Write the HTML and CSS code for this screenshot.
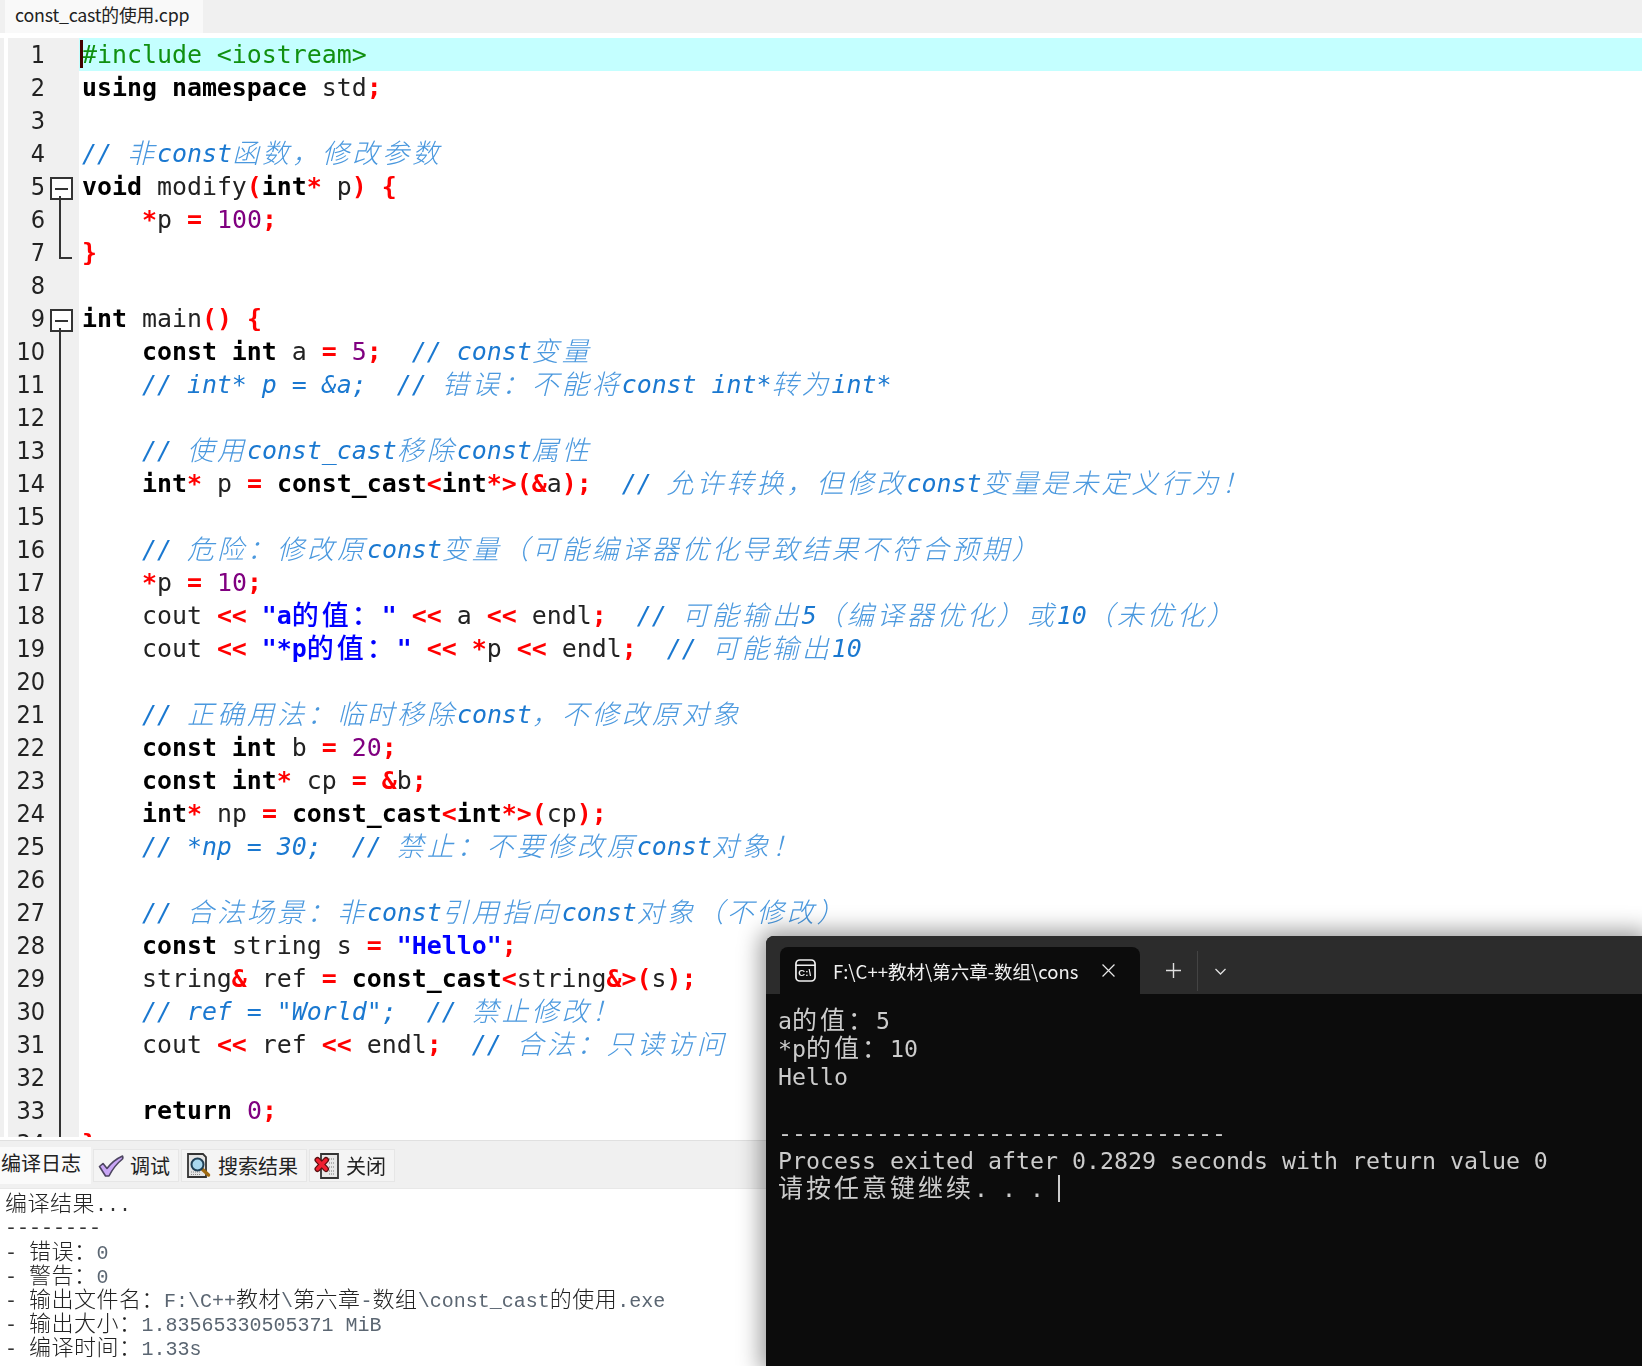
FILE: index.html
```html
<!DOCTYPE html>
<html lang="zh">
<head>
<meta charset="utf-8">
<title>const_cast的使用.cpp</title>
<link rel="stylesheet" href="styles.css">
</head>
<body>
<div class="app">
  <div class="filebar"><div class="filetab">const_cast的使用.cpp</div></div>
  <div class="editor">
    <div class="row active"><div class="gut"><span class="ln">1</span><span class="fold"></span></div><div class="code"><span class="caret"></span><span class="p">#include &lt;iostream&gt;</span></div></div>
    <div class="row"><div class="gut"><span class="ln">2</span><span class="fold"></span></div><div class="code"><b>using namespace</b> std<b class="s">;</b></div></div>
    <div class="row"><div class="gut"><span class="ln">3</span><span class="fold"></span></div><div class="code"></div></div>
    <div class="row"><div class="gut"><span class="ln">4</span><span class="fold"></span></div><div class="code c">// <i class="z">非</i>const<i class="z">函数，修改参数</i></div></div>
    <div class="row"><div class="gut"><span class="ln">5</span><span class="fold box"></span></div><div class="code"><b>void</b> modify<b class="s">(</b><b>int</b><b class="s">*</b> p<b class="s">)</b> <b class="s">{</b></div></div>
    <div class="row"><div class="gut"><span class="ln">6</span><span class="fold line"></span></div><div class="code">    <b class="s">*</b>p <b class="s">=</b> <span class="n">100</span><b class="s">;</b></div></div>
    <div class="row"><div class="gut"><span class="ln">7</span><span class="fold end"></span></div><div class="code"><b class="s">}</b></div></div>
    <div class="row"><div class="gut"><span class="ln">8</span><span class="fold"></span></div><div class="code"></div></div>
    <div class="row"><div class="gut"><span class="ln">9</span><span class="fold box"></span></div><div class="code"><b>int</b> main<b class="s">()</b> <b class="s">{</b></div></div>
    <div class="row"><div class="gut"><span class="ln">10</span><span class="fold line"></span></div><div class="code">    <b>const int</b> a <b class="s">=</b> <span class="n">5</span><b class="s">;</b>  <span class="c">// const<i class="z">变量</i></span></div></div>
    <div class="row"><div class="gut"><span class="ln">11</span><span class="fold line"></span></div><div class="code c">    // int* p = &amp;a;  // <i class="z">错误：不能将</i>const int*<i class="z">转为</i>int*</div></div>
    <div class="row"><div class="gut"><span class="ln">12</span><span class="fold line"></span></div><div class="code"></div></div>
    <div class="row"><div class="gut"><span class="ln">13</span><span class="fold line"></span></div><div class="code c">    // <i class="z">使用</i>const_cast<i class="z">移除</i>const<i class="z">属性</i></div></div>
    <div class="row"><div class="gut"><span class="ln">14</span><span class="fold line"></span></div><div class="code">    <b>int</b><b class="s">*</b> p <b class="s">=</b> <b>const_cast</b><b class="s">&lt;</b><b>int</b><b class="s">*&gt;(&amp;</b>a<b class="s">);</b>  <span class="c">// <i class="z">允许转换，但修改</i>const<i class="z">变量是未定义行为！</i></span></div></div>
    <div class="row"><div class="gut"><span class="ln">15</span><span class="fold line"></span></div><div class="code"></div></div>
    <div class="row"><div class="gut"><span class="ln">16</span><span class="fold line"></span></div><div class="code c">    // <i class="z">危险：修改原</i>const<i class="z">变量（可能编译器优化导致结果不符合预期）</i></div></div>
    <div class="row"><div class="gut"><span class="ln">17</span><span class="fold line"></span></div><div class="code">    <b class="s">*</b>p <b class="s">=</b> <span class="n">10</span><b class="s">;</b></div></div>
    <div class="row"><div class="gut"><span class="ln">18</span><span class="fold line"></span></div><div class="code">    cout <b class="s">&lt;&lt;</b> <b class="st">"a<i class="y">的值：</i>"</b> <b class="s">&lt;&lt;</b> a <b class="s">&lt;&lt;</b> endl<b class="s">;</b>  <span class="c">// <i class="z">可能输出</i>5<i class="z">（编译器优化）或</i>10<i class="z">（未优化）</i></span></div></div>
    <div class="row"><div class="gut"><span class="ln">19</span><span class="fold line"></span></div><div class="code">    cout <b class="s">&lt;&lt;</b> <b class="st">"*p<i class="y">的值：</i>"</b> <b class="s">&lt;&lt;</b> <b class="s">*</b>p <b class="s">&lt;&lt;</b> endl<b class="s">;</b>  <span class="c">// <i class="z">可能输出</i>10</span></div></div>
    <div class="row"><div class="gut"><span class="ln">20</span><span class="fold line"></span></div><div class="code"></div></div>
    <div class="row"><div class="gut"><span class="ln">21</span><span class="fold line"></span></div><div class="code c">    // <i class="z">正确用法：临时移除</i>const<i class="z">，不修改原对象</i></div></div>
    <div class="row"><div class="gut"><span class="ln">22</span><span class="fold line"></span></div><div class="code">    <b>const int</b> b <b class="s">=</b> <span class="n">20</span><b class="s">;</b></div></div>
    <div class="row"><div class="gut"><span class="ln">23</span><span class="fold line"></span></div><div class="code">    <b>const int</b><b class="s">*</b> cp <b class="s">=</b> <b class="s">&amp;</b>b<b class="s">;</b></div></div>
    <div class="row"><div class="gut"><span class="ln">24</span><span class="fold line"></span></div><div class="code">    <b>int</b><b class="s">*</b> np <b class="s">=</b> <b>const_cast</b><b class="s">&lt;</b><b>int</b><b class="s">*&gt;(</b>cp<b class="s">);</b></div></div>
    <div class="row"><div class="gut"><span class="ln">25</span><span class="fold line"></span></div><div class="code c">    // *np = 30;  // <i class="z">禁止：不要修改原</i>const<i class="z">对象！</i></div></div>
    <div class="row"><div class="gut"><span class="ln">26</span><span class="fold line"></span></div><div class="code"></div></div>
    <div class="row"><div class="gut"><span class="ln">27</span><span class="fold line"></span></div><div class="code c">    // <i class="z">合法场景：非</i>const<i class="z">引用指向</i>const<i class="z">对象（不修改）</i></div></div>
    <div class="row"><div class="gut"><span class="ln">28</span><span class="fold line"></span></div><div class="code">    <b>const</b> string s <b class="s">=</b> <b class="st">"Hello"</b><b class="s">;</b></div></div>
    <div class="row"><div class="gut"><span class="ln">29</span><span class="fold line"></span></div><div class="code">    string<b class="s">&amp;</b> ref <b class="s">=</b> <b>const_cast</b><b class="s">&lt;</b>string<b class="s">&amp;&gt;(</b>s<b class="s">);</b></div></div>
    <div class="row"><div class="gut"><span class="ln">30</span><span class="fold line"></span></div><div class="code c">    // ref = "World";  // <i class="z">禁止修改！</i></div></div>
    <div class="row"><div class="gut"><span class="ln">31</span><span class="fold line"></span></div><div class="code">    cout <b class="s">&lt;&lt;</b> ref <b class="s">&lt;&lt;</b> endl<b class="s">;</b>  <span class="c">// <i class="z">合法：只读访问</i></span></div></div>
    <div class="row"><div class="gut"><span class="ln">32</span><span class="fold line"></span></div><div class="code"></div></div>
    <div class="row"><div class="gut"><span class="ln">33</span><span class="fold line"></span></div><div class="code">    <b>return</b> <span class="n">0</span><b class="s">;</b></div></div>
    <div class="row"><div class="gut"><span class="ln">34</span><span class="fold end"></span></div><div class="code"><b class="s">}</b></div></div>
  </div>
  <div class="tools">
    <div class="tool current">编译日志</div>
    <div class="tool">
      <svg class="ico" viewBox="0 0 26 26"><path d="M1.5 13.5l3.5-3 4 5C13 10 18 6 24.5 3c.5 1 .5 2 0 3-5 4-10 10-13.5 17h-3.500z" fill="#c9a6f6" stroke="#4c4460" stroke-width="1.600" stroke-linejoin="round"/></svg>
      调试
    </div>
    <div class="tool">
      <svg class="ico" viewBox="0 0 26 26"><path d="M2 1h15l3 3v20H2z" fill="#e4e4e4" stroke="#333" stroke-width="1.800"/><path d="M5 19h10M5 21.500h10" stroke="#888" stroke-dasharray="1 1"/><path d="M15 15l7.500 7" stroke="#a06a10" stroke-width="3.500" stroke-linecap="round"/><circle cx="11.500" cy="11.500" r="6" fill="#a9d8ef" stroke="#1f3f55" stroke-width="2"/></svg>
      搜索结果
    </div>
    <div class="tool">
      <svg class="ico" viewBox="0 0 26 26"><path d="M7 1h17v24H7z" fill="#e8e8e8" stroke="#333" stroke-width="1.800"/><path d="M15 6h6M15 10h6M15 14h6M15 18h6M15 21h6" stroke="#777" stroke-dasharray="1 1"/><path d="M3.500 7l8.500 9M12 7l-8.500 9" stroke="#5a1010" stroke-width="6" stroke-linecap="round"/><path d="M3.500 7l8.500 9M12 7l-8.500 9" stroke="#f02030" stroke-width="3.500" stroke-linecap="round"/></svg>
      关闭
    </div>
  </div>
  <div class="log">
    <div class="lg first"><span class="h">编译结果</span>...</div>
    <div class="lg dash">--------</div>
    <div class="lg">- <span class="h">错误：</span><span class="v">0</span></div>
    <div class="lg">- <span class="h">警告：</span><span class="v">0</span></div>
    <div class="lg">- <span class="h">输出文件名：</span><span class="v">F:\C++<span class="h">教材</span>\<span class="h">第六章</span>-<span class="h">数组</span>\const_cast<span class="h">的使用</span>.exe</span></div>
    <div class="lg">- <span class="h">输出大小：</span><span class="v">1.83565330505371 MiB</span></div>
    <div class="lg">- <span class="h">编译时间：</span><span class="v">1.33s</span></div>
  </div>
</div>
<div class="term">
  <div class="term-bar">
    <div class="term-tab">
      <svg class="term-ico" viewBox="0 0 22 24"><rect x="1" y="1" width="20" height="22" rx="4" fill="none" stroke="#f0f0f0" stroke-width="1.800"/><path d="M1 6.500h20" stroke="#f0f0f0" stroke-width="1.600"/><text x="3.500" y="18" class="term-ico-t">C:\</text></svg>
      <span class="term-title">F:\C++教材\第六章-数组\const_cast的使用.exe</span>
      <svg class="term-x" viewBox="0 0 12 12"><path d="M0.500 0.500l11 11M11.500 0.500l-11 11" stroke="#e8e8e8" stroke-width="1.100"/></svg>
    </div>
    <svg class="term-plus" viewBox="0 0 14 14"><path d="M7 0v14M0 7h14" stroke="#e0e0e0" stroke-width="1.300"/></svg>
    <span class="term-div"></span>
    <svg class="term-chev" viewBox="0 0 12 8"><path d="M1 1l5 5 5-5" fill="none" stroke="#e0e0e0" stroke-width="1.300"/></svg>
  </div>
  <div class="term-body">
    <div class="tl">a<span class="tz">的值：</span>5</div>
    <div class="tl">*p<span class="tz">的值：</span>10</div>
    <div class="tl">Hello</div>
    <div class="tl"></div>
    <div class="tl">--------------------------------</div>
    <div class="tl">Process exited after 0.2829 seconds with return value 0</div>
    <div class="tl"><span class="tz">请按任意键继续</span>. . . <span class="tcur"></span></div>
  </div>
</div>
</body>
</html>
```

FILE: styles.css
```css
* { box-sizing: border-box; }
html, body { margin: 0; height: 1366px; overflow: hidden; background: #fff; }
.app { height: 1366px; display: flex; flex-direction: column; filter: blur(0.45px); overflow: hidden; }

.filebar { height: 38px; flex: none; background: linear-gradient(#f0f0f0 0 33px, #fff 33px); padding-left: 5px; }
.filetab { width: 198px; height: 33px; background: #f9f9f9; padding-left: 10px; font: 17.8px/29px "Noto Sans CJK SC", "Noto Sans", sans-serif; color: #222; white-space: nowrap; letter-spacing: -0.2px; }

.editor { height: 1099px; flex: none; overflow: hidden; padding-left: 9px; border-left: 4px solid #f0f0f0; font: 24.9px/33px "DejaVu Sans Mono", "Noto Sans CJK SC", monospace; color: #222; }
.row { display: flex; height: 33px; }
.active { background: #c4ffff; }
.gut { flex: none; width: 71px; margin-left: -5px; padding-left: 5px; display: flex; background: #f0f0f0; }
.ln { width: 32px; flex: none; text-align: right; font-size: 25px; color: #222; font-family: "DejaVu Sans Condensed", "DejaVu Sans Mono", monospace; }
.fold { position: relative; flex: none; width: 34px; }
.fold.box::before { content: ""; position: absolute; left: 5px; top: 7px; width: 19px; height: 19px; border: 2px solid #333; background: linear-gradient(#333, #333) center / 13px 2px no-repeat #fff; }
.fold.box::after { content: ""; position: absolute; left: 14px; top: 26px; height: 7px; border-left: 2px solid #333; }
.fold.line::before { content: ""; position: absolute; left: 14px; top: 0; bottom: 0; border-left: 2px solid #333; }
.fold.end::before { content: ""; position: absolute; left: 14px; top: 0; height: 21px; width: 11px; border-left: 2px solid #333; border-bottom: 2px solid #333; }
.code { flex: 1; padding-left: 3px; white-space: pre; position: relative; }
.caret { position: absolute; left: 1px; top: 2px; width: 2.5px; height: 28px; background: #400; }
b { font-weight: 700; color: #000; }
b.s { color: #f00; }
b.st { color: #00f; }
.n { color: #800080; }
.p { color: #109010; }
.c { color: #1a78d0; font-style: italic; }
.z { font-size: 27px; letter-spacing: 3px; font-style: italic; font-weight: 300; color: #4a98de; vertical-align: -1px; }
.y { font-size: 27px; letter-spacing: 3px; font-style: normal; font-weight: 500; vertical-align: -1px; }

.tools { flex: none; height: 48px; margin-top: 3px; padding-top: 6px; background: #f0f0f0; border-top: 1px solid #e0e0e0; display: flex; gap: 2px; font: 20px/32px "Noto Sans CJK SC", sans-serif; color: #222; }
.tool { display: flex; align-items: center; gap: 6px; padding: 0 8px 0 4px; height: 33px; margin-top: 2px; background: #f4f4f4; border: 1px solid #e6e6e6; white-space: nowrap; }
.tool.current { margin-top: 0; height: 37px; padding: 0 12px 6px 1px; background: #fafafa; border: 0; width: 91px; }
.ico { width: 26px; height: 26px; flex: none; }

.log { flex: 1; padding: 0 0 0 5px; border-top: 1px solid #e8e8e8; font: 20px/24px "Liberation Mono", "Noto Sans CJK SC", monospace; color: #333; }
.lg { height: 24px; white-space: pre; }
.lg.first { margin-top: -1px; height: 29px; line-height: 26px; }
.lg.dash { height: 20px; }
.h { font-size: 22px; letter-spacing: 0.5px; font-family: "Noto Sans CJK SC", sans-serif; font-weight: 300; color: #222; }
.v { color: #5b6672; }

.term { position: absolute; left: 766px; top: 936px; right: 0; bottom: 0; background: #0c0c0c; border-top-left-radius: 8px; box-shadow: 0 0 22px 6px rgba(0,0,0,.38); filter: blur(0.3px); }
.term-bar { height: 58px; background: #2c2c2c; border-top-left-radius: 8px; padding: 11px 0 0 14px; display: flex; align-items: flex-start; }
.term-tab { width: 360px; height: 47px; background: #0c0c0c; border-radius: 8px 8px 0 0; display: flex; align-items: center; padding-left: 15px; position: relative; }
.term-ico { width: 21px; height: 23px; flex: none; }
.term-ico-t { font: 700 10px "Liberation Sans", sans-serif; fill: #f0f0f0; }
.term-title { width: 245px; margin-left: 17px; overflow: hidden; white-space: nowrap; font: 18.5px/24px "Noto Sans CJK SC", "Noto Sans", sans-serif; color: #f0f0f0; }
.term-x { width: 13px; height: 13px; flex: none; margin-left: 24px; }
.term-plus { width: 15px; height: 15px; flex: none; margin: 16px 0 0 26px; }
.term-div { width: 1px; height: 40px; flex: none; margin: 4px 0 0 16px; background: #444; }
.term-chev { width: 13px; height: 8px; flex: none; margin: 21px 0 0 16px; }
.term-body { padding: 13px 0 0 12px; font: 23.25px/28px "DejaVu Sans Mono", "Noto Sans CJK SC", monospace; color: #ccc; }
.tl { height: 28px; white-space: pre; }
.tz { font-size: 25px; letter-spacing: 3px; }
.tcur { display: inline-block; width: 1.5px; height: 27px; background: #ccc; vertical-align: -5px; }
```
